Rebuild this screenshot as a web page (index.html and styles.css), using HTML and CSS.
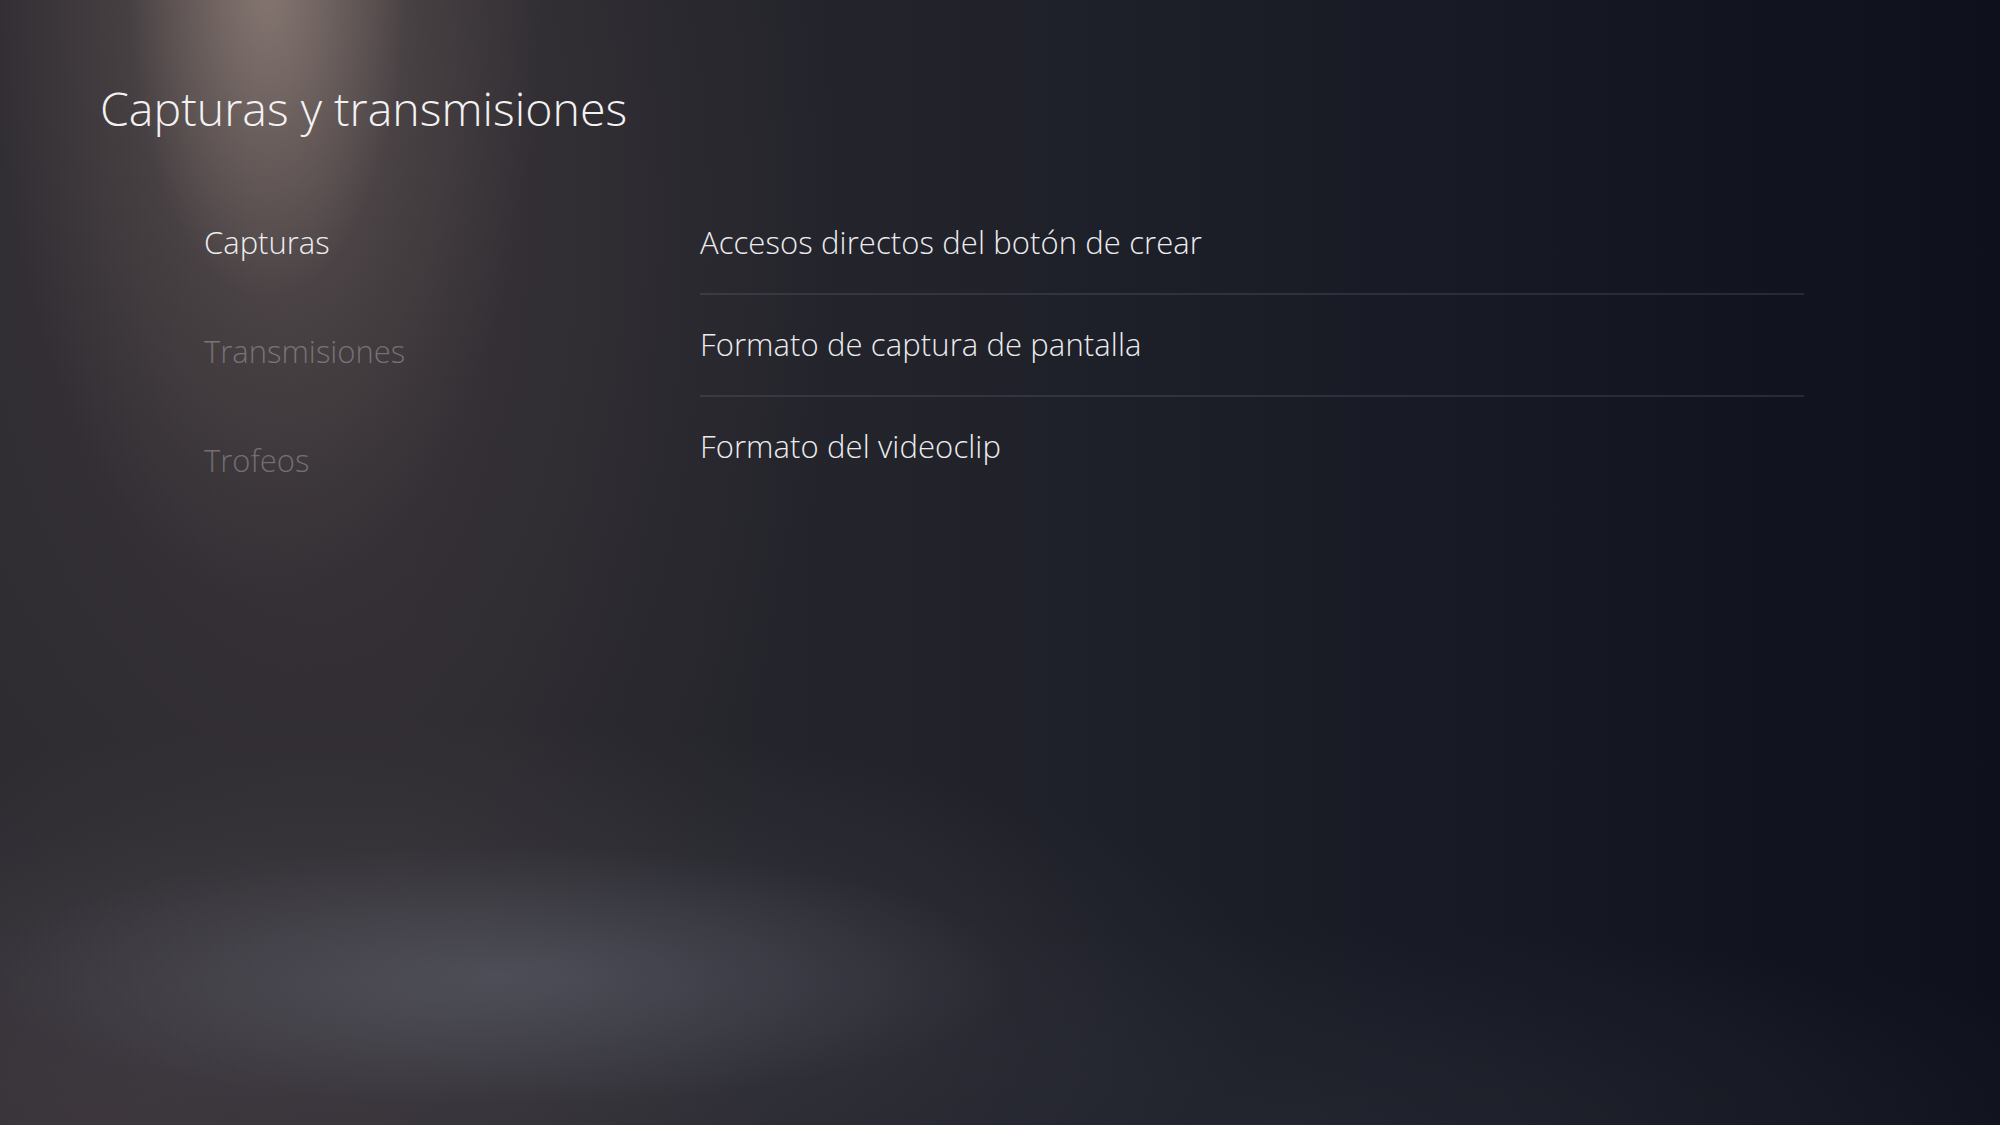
FILE: index.html
```html
<!DOCTYPE html>
<html lang="es">
<head>
<meta charset="utf-8">
<title>Capturas y transmisiones</title>
<link rel="stylesheet" href="styles.css">
</head>
<body class="screen">
  <main class="page">
    <h1 class="page-title">Capturas y transmisiones</h1>
    <div class="settings">
      <nav class="categories">
        <div class="category category--active">Capturas</div>
        <div class="category">Transmisiones</div>
        <div class="category">Trofeos</div>
      </nav>
      <ul class="options">
        <li class="option">Accesos directos del botón de crear</li>
        <li class="option">Formato de captura de pantalla</li>
        <li class="option option--last">Formato del videoclip</li>
      </ul>
    </div>
  </main>
</body>
</html>
```

FILE: styles.css
```css
html, body {
  margin: 0;
  padding: 0;
}

*, *::before, *::after {
  box-sizing: border-box;
}

.screen {
  width: 2000px;
  height: 1125px;
  overflow: hidden;
  font-family: "Open Sans", "Noto Sans", sans-serif;
  color: #ececee;
  background:
    radial-gradient(ellipse 140px 320px at 268px -20px, rgba(170, 150, 140, 0.55), rgba(170, 150, 140, 0) 100%),
    radial-gradient(ellipse 280px 640px at 268px -40px, rgba(140, 122, 116, 0.42), rgba(140, 122, 116, 0) 100%),
    radial-gradient(ellipse 520px 900px at 320px 220px, rgba(80, 70, 72, 0.45), rgba(80, 70, 72, 0) 100%),
    radial-gradient(ellipse 520px 130px at 500px 975px, rgba(95, 100, 112, 0.5), rgba(95, 100, 112, 0) 100%),
    radial-gradient(ellipse 850px 280px at 430px 1000px, rgba(80, 78, 86, 0.45), rgba(80, 78, 86, 0) 100%),
    radial-gradient(ellipse 700px 300px at 100px 1125px, rgba(70, 58, 64, 0.5), rgba(70, 58, 64, 0) 100%),
    radial-gradient(ellipse 900px 200px at 1300px 1125px, rgba(40, 42, 52, 0.6), rgba(40, 42, 52, 0) 100%),
    linear-gradient(to right, #2b292f 0%, #2a282e 20%, #22232b 45%, #181b25 70%, #11141e 90%, #0e111b 100%);
}

.page {
  padding: 77px 0 0 100px;
}

.page-title {
  margin: 0;
  font-size: 46.5px;
  line-height: 62px;
  font-weight: 300;
  color: #f2f2f2;
}

.settings {
  display: flex;
  margin-top: 54px;
}

.categories {
  flex: 0 0 600px;
  display: flex;
  flex-direction: column;
  gap: 69px;
  padding-left: 104px;
  padding-top: 29px;
}

.category {
  font-size: 31px;
  line-height: 40px;
  font-weight: 300;
  color: rgba(255, 255, 255, 0.28);
}

.category--active {
  color: #ededee;
}

.options {
  list-style: none;
  margin: 0;
  padding: 0;
  width: 1104px;
}

.option {
  font-size: 31px;
  line-height: 40px;
  font-weight: 300;
  letter-spacing: 0.1px;
  color: #ececee;
  padding: 29px 0 31px;
  border-bottom: 2px solid rgba(120, 122, 140, 0.22);
}

.option--last {
  border-bottom: none;
}
```
